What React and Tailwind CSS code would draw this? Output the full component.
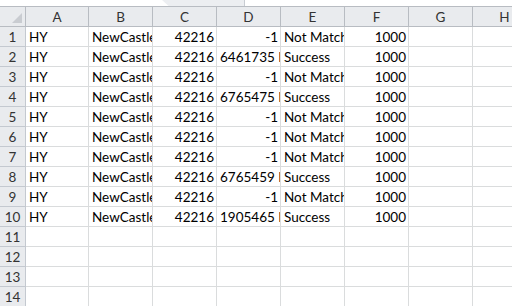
const cols = ['A', 'B', 'C', 'D', 'E', 'F', 'G', 'H'];

const rows = [
  { d: '-1', e: 'Not Match' },
  { d: '6461735 K', e: 'Success' },
  { d: '-1', e: 'Not Match' },
  { d: '6765475 M', e: 'Success' },
  { d: '-1', e: 'Not Match' },
  { d: '-1', e: 'Not Match' },
  { d: '-1', e: 'Not Match' },
  { d: '6765459 K', e: 'Success' },
  { d: '-1', e: 'Not Match' },
  { d: '1905465 N', e: 'Success' },
];

const grid = 'grid grid-cols-[26px_63px_64px_64px_64px_64px_64px_64px_64px]';

const Cell = ({ children, right }) => (
  <div
    className={`h-5 border-r border-b border-[#dadcdd] overflow-hidden whitespace-nowrap leading-[20px] ${
      right ? 'text-right pr-[2px]' : 'pl-[3px]'
    }`}
  >
    {children}
  </div>
);

const RowHead = ({ n }) => (
  <div className="h-5 border-r border-b border-[#c4c9d0] bg-[#e9ebee] text-center text-[#333] leading-[20px]">
    {n}
  </div>
);

export default function App() {
  return (
    <div className="w-[512px] h-[306px] overflow-hidden bg-white text-black text-[13.5px] font-['Lato','Liberation_Sans',sans-serif]">
      <div className="h-[7px] flex border-b border-[#b8bcc2]">
        <div className="w-[162px]" />
        <div className="w-[83px] bg-[#eceef1] border-r border-[#c8ccd2] [clip-path:polygon(0_0,100%_0,100%_100%,8%_100%)]" />
      </div>
      <div className={grid}>
        <div className="h-5 border-r border-b border-[#b8bcc2] bg-[#e9ebee] relative">
          <div className="absolute right-[3px] bottom-[3px] w-0 h-0 border-l-[10px] border-l-transparent border-b-[10px] border-b-[#c9ccd1]" />
        </div>
        {cols.map((c) => (
          <div
            key={c}
            className="h-5 border-r border-b border-[#b8bcc2] bg-[#e9ebee] text-center text-[#333] leading-[20px]"
          >
            {c}
          </div>
        ))}
        {rows.map((r, i) => (
          <div key={i} className="contents">
            <RowHead n={i + 1} />
            <Cell>HY</Cell>
            <Cell>NewCastle</Cell>
            <Cell right>42216</Cell>
            <Cell right={r.d === '-1'}>{r.d}</Cell>
            <Cell>{r.e}</Cell>
            <Cell right>1000</Cell>
            <Cell />
            <Cell />
          </div>
        ))}
        {[11, 12, 13, 14].map((n) => (
          <div key={n} className="contents">
            <RowHead n={n} />
            {cols.map((c) => (
              <Cell key={c} />
            ))}
          </div>
        ))}
      </div>
    </div>
  );
}
